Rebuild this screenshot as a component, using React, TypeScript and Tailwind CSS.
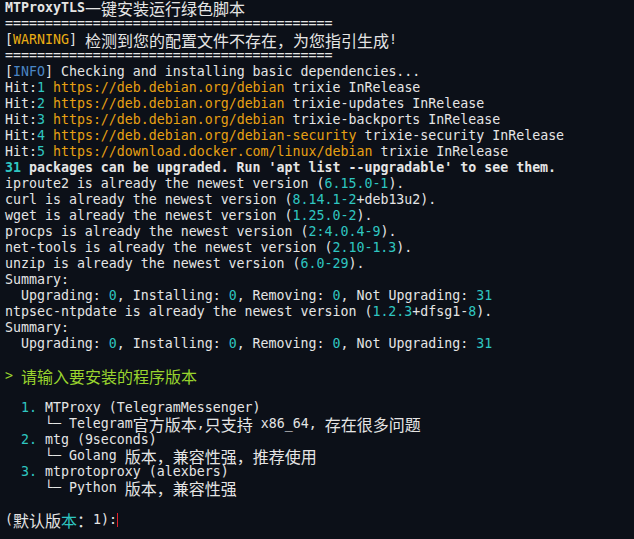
import React from "react";

type Seg = [string, string?];

const W = "text-[#e5e5e5]";
const C = "text-[#2fc6c1]";
const O = "text-[#e8a013]";
const Y = "text-[#e9ad14]";
const B = "text-[#4a86c5]";
const G = "text-[#99d42e]";

const isWide = (ch: string) => /[\u3000-\u303f\u3400-\u9fff\uff00-\uffef]/.test(ch);

// split a string into runs so wide (CJK) glyphs get a 2-cell width
const Runs: React.FC<{ text: string; className?: string }> = ({ text, className }) => {
  const runs: { wide: boolean; s: string }[] = [];
  for (const ch of text) {
    const wide = isWide(ch);
    const last = runs[runs.length - 1];
    if (last && last.wide === wide) last.s += ch;
    else runs.push({ wide, s: ch });
  }
  return (
    <>
      {runs.map((r, i) =>
        r.wide ? (
          <span
            key={i}
            className={`${className ?? W} h-4 text-[16px] leading-4 font-normal [font-family:'Noto_Sans_CJK_SC',sans-serif]`}
          >
            {r.s}
          </span>
        ) : (
          <span key={i} className={`${className ?? W} h-4 leading-4`}>
            {r.s}
          </span>
        )
      )}
    </>
  );
};

const Row: React.FC<{ segs?: Seg[]; bold?: boolean; children?: React.ReactNode }> = ({ segs = [], bold, children }) => (
  <div className={`flex h-4 items-center leading-4 whitespace-pre ${bold ? "font-bold" : ""}`}>
    {segs.map((s, i) => (
      <Runs key={i} text={s[0]} className={s[1]} />
    ))}
    {children}
  </div>
);

const sep = "=".repeat(41);

const hits: [string, string, string][] = [
  ["1", "https://deb.debian.org/debian", " trixie InRelease"],
  ["2", "https://deb.debian.org/debian", " trixie-updates InRelease"],
  ["3", "https://deb.debian.org/debian", " trixie-backports InRelease"],
  ["4", "https://deb.debian.org/debian-security", " trixie-security InRelease"],
  ["5", "https://download.docker.com/linux/debian", " trixie InRelease"],
];

const newest: Seg[][] = [
  [["iproute2 is already the newest version ("], ["6.15.0-1", C], [")."]],
  [["curl is already the newest version ("], ["8.14.1-2", C], ["+deb13u2)."]],
  [["wget is already the newest version ("], ["1.25.0-2", C], [")."]],
  [["procps is already the newest version ("], ["2:4.0.4-9", C], [")."]],
  [["net-tools is already the newest version ("], ["2.10-1.3", C], [")."]],
  [["unzip is already the newest version ("], ["6.0-29", C], [")."]],
];

const upgrading: Seg[] = [
  ["  Upgrading: "],
  ["0", C],
  [", Installing: "],
  ["0", C],
  [", Removing: "],
  ["0", C],
  [", Not Upgrading: "],
  ["31", C],
];

export default function App() {
  return (
    <div className="w-[634px] h-[539px] overflow-hidden bg-[#0c1018] pl-[5px] text-[13.28px] text-[#e5e5e5] [font-family:'DejaVu_Sans_Mono',monospace]">
      <Row bold segs={[["MTProxyTLS一键安装运行绿色脚本"]]} />
      <Row segs={[[sep]]} />
      <Row segs={[["["], ["WARNING", Y], ["] 检测到您的配置文件不存在，为您指引生成!"]]} />
      <Row segs={[[sep]]} />
      <Row segs={[["["], ["INFO", B], ["] Checking and installing basic dependencies..."]]} />
      {hits.map(([n, url, rest]) => (
        <Row key={n} segs={[["Hit:"], [n, C], [" "], [url, O], [rest]]} />
      ))}
      <Row bold segs={[["31", C], [" packages can be upgraded. Run 'apt list --upgradable' to see them."]]} />
      {newest.map((s, i) => (
        <Row key={i} segs={s} />
      ))}
      <Row segs={[["Summary:"]]} />
      <Row segs={upgrading} />
      <Row segs={[["ntpsec-ntpdate is already the newest version ("], ["1.2.3", C], ["+dfsg1-"], ["8", C], [")."]]} />
      <Row segs={[["Summary:"]]} />
      <Row segs={upgrading} />
      <Row />
      <Row segs={[["> 请输入要安装的程序版本", G]]} />
      <Row />
      <Row segs={[["  "], ["1.", C], [" MTProxy (TelegramMessenger)"]]} />
      <Row segs={[["     └─ Telegram官方版本,只支持 x86_64, 存在很多问题"]]} />
      <Row segs={[["  "], ["2.", C], [" mtg (9seconds)"]]} />
      <Row segs={[["     └─ Golang 版本，兼容性强，推荐使用"]]} />
      <Row segs={[["  "], ["3.", C], [" mtprotoproxy (alexbers)"]]} />
      <Row segs={[["     └─ Python 版本，兼容性强"]]} />
      <Row />
      <Row segs={[["(默认版"], ["本", C], ["：1):"]]}>
        <span className="inline-block w-[1px] h-[14px] bg-[#e0202a]" />
      </Row>
    </div>
  );
}
